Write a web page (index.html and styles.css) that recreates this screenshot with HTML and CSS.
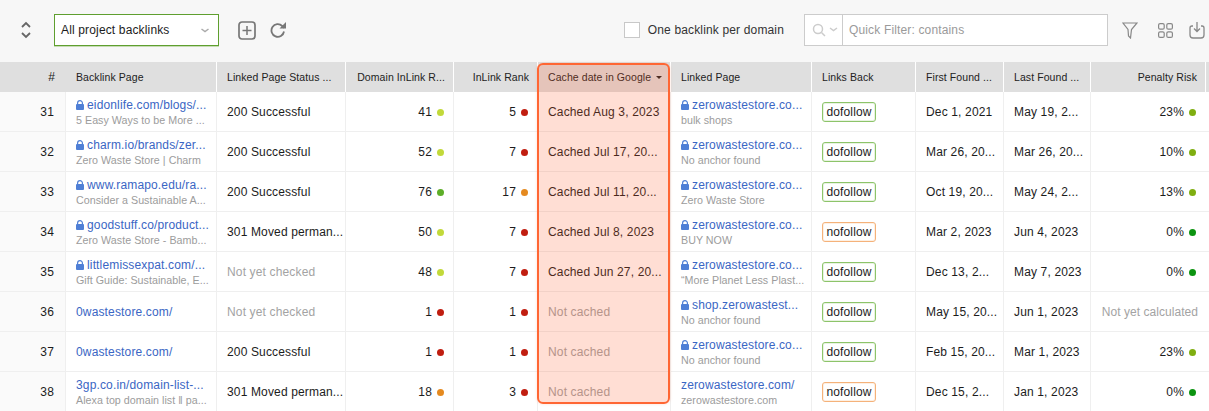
FILE: index.html
```html
<!DOCTYPE html>
<html lang="en">
<head>
<meta charset="utf-8">
<title>Backlinks</title>
<link rel="stylesheet" href="styles.css">
</head>
<body>
<svg class="defs" width="0" height="0"><symbol id="lock" viewBox="0 0 8 10"><path d="M1.600 4.500V3a2.400 2.400 0 0 1 4.800 0v1.500" fill="none" stroke="#4f7fd6" stroke-width="1.200"/><rect y="4" width="8" height="6" rx="1" fill="#4f7fd6"/></symbol></svg>
<div class="toolbar">
  <svg class="ic-sort" width="10" height="18" viewBox="0 0 10 18"><path d="M1 6l4-4 4 4M1 12l4 4 4-4" fill="none" stroke="#666" stroke-width="1.800"/></svg>
  <div class="select"><span>All project backlinks</span><svg width="8" height="5" viewBox="0 0 8 5"><path d="M.5 1L4 3.500 7.500 1" fill="none" stroke="#aaa" stroke-width="1.500"/></svg></div>
  <svg class="ic-plus" width="18" height="19" viewBox="0 0 18 19"><rect x="1" y="1" width="16" height="17" rx="3" fill="none" stroke="#777" stroke-width="1.700"/><path d="M9 5v9M4.500 9.500h9" stroke="#777" stroke-width="1.500"/></svg>
  <svg class="ic-reload" width="17" height="16" viewBox="0 0 17 16"><path d="M14 9.500a6.300 6.300 0 1 1-1.800-5.500l2 1.800" fill="none" stroke="#777" stroke-width="1.800"/><path d="M16 0v6.500H9.500z" fill="#777"/></svg>
  <div class="spacer"></div>
  <span class="check"></span><span class="check-label">One backlink per domain</span>
  <div class="filter">
    <div class="filter-icon"><svg width="26" height="14" viewBox="0 0 26 14"><circle cx="6" cy="6" r="4.500" fill="none" stroke="#ccc" stroke-width="1.500"/><path d="M9.500 9.500l3.500 3.500" stroke="#ccc" stroke-width="1.500"/><path d="M18 5l3.500 2.500L25 5" fill="none" stroke="#ccc" stroke-width="1.500"/></svg></div>
    <span class="filter-text">Quick Filter: contains</span>
  </div>
  <svg class="ic-funnel" width="16" height="17" viewBox="0 0 16 17"><path d="M1 1h14l-5.500 6.500-1 8.500-2-2-.5-6.500z" fill="none" stroke="#888" stroke-width="1.200"/></svg>
  <svg class="ic-grid" width="15" height="15" viewBox="0 0 15 15"><g fill="none" stroke="#888" stroke-width="1.200"><rect x=".6" y=".6" width="5.600" height="5.600" rx="1.500"/><rect x="8.800" y=".6" width="5.600" height="5.600" rx="1.500"/><rect x=".6" y="8.800" width="5.600" height="5.600" rx="1.500"/><rect x="8.800" y="8.800" width="5.600" height="5.600" rx="1.500"/></g></svg>
  <svg class="ic-export" width="16" height="18" viewBox="0 0 16 18"><path d="M4 5H3a2 2 0 0 0-2 2v7a3 3 0 0 0 3 3h8a3 3 0 0 0 3-3V7a2 2 0 0 0-2-2h-1M8 1v9M5 7.500l3 3 3-3" fill="none" stroke="#888" stroke-width="1.300"/></svg>
</div>

<div class="grid-wrap">
<table class="grid">
  <colgroup>
    <col class="c-num"><col class="c-page"><col class="c-status"><col class="c-dom"><col class="c-rank"><col class="c-cache"><col class="c-linked"><col class="c-back"><col class="c-first"><col class="c-last"><col class="c-risk"><col class="c-end">
  </colgroup>
  <thead>
    <tr>
      <th class="r nosep hash">#</th><th>Backlink Page</th><th>Linked Page Status ...</th><th class="r">Domain InLink R...</th><th class="r">InLink Rank</th>
      <th>Cache date in Google<i class="caret"></i></th><th>Linked Page</th><th>Links Back</th><th>First Found ...</th><th>Last Found ...</th><th class="r">Penalty Risk</th><th class="nosep"></th>
    </tr>
  </thead>
  <tbody>
    <tr>
      <td class="num">31</td>
      <td class="link"><a class="l"><svg class="lock"><use href="#lock"/></svg>eidonlife.com/blogs/...</a><small>5 Easy Ways to be More ...</small></td>
      <td>200 Successful</td><td class="r">41<i class="dot lime"></i></td><td class="r">5<i class="dot red"></i></td><td>Cached Aug 3, 2023</td>
      <td class="link"><a class="l"><svg class="lock"><use href="#lock"/></svg>zerowastestore.co...</a><small>bulk shops</small></td>
      <td><span class="tag do">dofollow</span></td><td>Dec 1, 2021</td><td>May 19, 2...</td><td class="r">23%<i class="dot olive"></i></td><td class="end"></td>
    </tr>
    <tr>
      <td class="num">32</td>
      <td class="link"><a class="l"><svg class="lock"><use href="#lock"/></svg>charm.io/brands/zer...</a><small>Zero Waste Store | Charm</small></td>
      <td>200 Successful</td><td class="r">52<i class="dot lime"></i></td><td class="r">7<i class="dot red"></i></td><td>Cached Jul 17, 20...</td>
      <td class="link"><a class="l"><svg class="lock"><use href="#lock"/></svg>zerowastestore.co...</a><small>No anchor found</small></td>
      <td><span class="tag do">dofollow</span></td><td>Mar 26, 20...</td><td>Mar 26, 20...</td><td class="r">10%<i class="dot olive"></i></td><td class="end"></td>
    </tr>
    <tr>
      <td class="num">33</td>
      <td class="link"><a class="l"><svg class="lock"><use href="#lock"/></svg>www.ramapo.edu/ra...</a><small>Consider a Sustainable A...</small></td>
      <td>200 Successful</td><td class="r">76<i class="dot green"></i></td><td class="r">17<i class="dot orange"></i></td><td>Cached Jul 11, 20...</td>
      <td class="link"><a class="l"><svg class="lock"><use href="#lock"/></svg>zerowastestore.co...</a><small>Zero Waste Store</small></td>
      <td><span class="tag do">dofollow</span></td><td>Oct 19, 20...</td><td>May 24, 2...</td><td class="r">13%<i class="dot olive"></i></td><td class="end"></td>
    </tr>
    <tr>
      <td class="num">34</td>
      <td class="link"><a class="l"><svg class="lock"><use href="#lock"/></svg>goodstuff.co/product...</a><small>Zero Waste Store - Bamb...</small></td>
      <td>301 Moved perman...</td><td class="r">50<i class="dot lime"></i></td><td class="r">7<i class="dot red"></i></td><td>Cached Jul 8, 2023</td>
      <td class="link"><a class="l"><svg class="lock"><use href="#lock"/></svg>zerowastestore.co...</a><small>BUY NOW</small></td>
      <td><span class="tag no">nofollow</span></td><td>Mar 2, 2023</td><td>Jun 4, 2023</td><td class="r">0%<i class="dot green2"></i></td><td class="end"></td>
    </tr>
    <tr>
      <td class="num">35</td>
      <td class="link"><a class="l"><svg class="lock"><use href="#lock"/></svg>littlemissexpat.com/...</a><small>Gift Guide: Sustainable, E...</small></td>
      <td class="muted">Not yet checked</td><td class="r">48<i class="dot lime"></i></td><td class="r">7<i class="dot red"></i></td><td>Cached Jun 27, 20...</td>
      <td class="link"><a class="l"><svg class="lock"><use href="#lock"/></svg>zerowastestore.co...</a><small>“More Planet Less Plast...</small></td>
      <td><span class="tag do">dofollow</span></td><td>Dec 13, 2...</td><td>May 7, 2023</td><td class="r">0%<i class="dot green2"></i></td><td class="end"></td>
    </tr>
    <tr>
      <td class="num">36</td>
      <td class="link"><a class="l">0wastestore.com/</a></td>
      <td class="muted">Not yet checked</td><td class="r">1<i class="dot red"></i></td><td class="r">1<i class="dot red"></i></td><td class="muted">Not cached</td>
      <td class="link"><a class="l"><svg class="lock"><use href="#lock"/></svg>shop.zerowastest...</a><small>No anchor found</small></td>
      <td><span class="tag do">dofollow</span></td><td>May 15, 20...</td><td>Jun 1, 2023</td><td class="r muted">Not yet calculated</td><td class="end"></td>
    </tr>
    <tr>
      <td class="num">37</td>
      <td class="link"><a class="l">0wastestore.com/</a></td>
      <td>200 Successful</td><td class="r">1<i class="dot red"></i></td><td class="r">1<i class="dot red"></i></td><td class="muted">Not cached</td>
      <td class="link"><a class="l"><svg class="lock"><use href="#lock"/></svg>zerowastestore.co...</a><small>No anchor found</small></td>
      <td><span class="tag do">dofollow</span></td><td>Feb 15, 20...</td><td>Mar 1, 2023</td><td class="r">23%<i class="dot olive"></i></td><td class="end"></td>
    </tr>
    <tr>
      <td class="num">38</td>
      <td class="link"><a class="l">3gp.co.in/domain-list-...</a><small>Alexa top domain list ‖ pa...</small></td>
      <td>301 Moved perman...</td><td class="r">18<i class="dot orange"></i></td><td class="r">3<i class="dot red"></i></td><td class="muted">Not cached</td>
      <td class="link"><a class="l">zerowastestore.com/</a><small>zerowastestore.com</small></td>
      <td><span class="tag no">nofollow</span></td><td>Dec 15, 2...</td><td>Jan 1, 2023</td><td class="r">0%<i class="dot green2"></i></td><td class="end"></td>
    </tr>
  </tbody>
</table>
<div class="highlight"></div>
</div>
</body>
</html>
```
FILE: styles.css
```css
* { box-sizing: border-box; }
html, body { margin: 0; height: 411px; overflow: hidden; }
body { background: #fff; font: 12px/14px "Liberation Sans", Arial, sans-serif; color: #1c1c1c; letter-spacing: .15px; }
.defs { position: absolute; }

.toolbar { height: 62px; background: #f7f7f7; display: flex; align-items: center; padding: 0 0 2px 21px; }
.ic-sort { flex: none; }
.select { width: 165px; height: 32px; margin-left: 23px; background: #fff; border: 1px solid #5f9f2f; display: flex; align-items: center; justify-content: space-between; padding: 0 9px 0 6px; box-shadow: 0 1px 0 #c6dcb4; }
.ic-plus { margin-left: 19px; flex: none; }
.ic-reload { margin-left: 14px; flex: none; }
.spacer { flex: 1; }
.check { width: 16px; height: 16px; background: #fff; border: 1px solid #c8c8c8; }
.check-label { margin-left: 8px; color: #333; }
.filter { width: 304px; height: 32px; margin-left: 20px; background: #fff; border: 1px solid #ccc; display: flex; }
.filter-icon { width: 38px; border-right: 1px solid #ccc; display: flex; align-items: center; padding-left: 7px; }
.filter-text { padding-left: 6px; line-height: 30px; color: #9a9a9a; }
.ic-funnel { margin-left: 14px; flex: none; }
.ic-grid { margin-left: 20px; flex: none; }
.ic-export { margin-left: 16px; margin-right: 4px; flex: none; }

.grid-wrap { position: relative; }
.grid { width: 1209px; table-layout: fixed; border-collapse: separate; border-spacing: 0; }
.c-num { width: 66px; }
.c-page { width: 151px; }
.c-status { width: 129px; }
.c-dom { width: 108px; }
.c-rank { width: 84px; }
.c-cache { width: 133px; }
.c-linked { width: 141px; }
.c-back { width: 104px; }
.c-first { width: 88px; }
.c-last { width: 87px; }
.c-risk { width: 115px; }
.c-end { width: 3px; }

th { height: 30px; background: #dfdfdf; font-size: 10.5px; letter-spacing: .08px; font-weight: 400; text-align: left; padding: 0 3px 0 10px; border-right: 1px solid #fff; white-space: nowrap; overflow: hidden; color: #222; }
th.nosep { border-right-color: #dfdfdf; }
td { height: 40px; padding: 0 3px 0 10px; border-right: 1px solid #efefef; border-bottom: 1px solid #efefef; white-space: nowrap; overflow: hidden; }
td.link { padding-top: 2px; }
td.end { padding: 0; border-right: 0; }
th.r { text-align: right; padding: 0 8px 0 0; }
th.hash { font-size: 12px; padding-right: 10px; }
td.r { text-align: right; padding: 0 9px 0 0; }
td.num { text-align: right; padding: 0 11px 0 0; background: #fafafa; }
.muted { color: #a3a3a3; }
td.r.muted { padding-right: 8px; letter-spacing: .05px; }
td:nth-child(11) { border-right: 0; padding-right: 10px; }

.l { display: block; color: #3a66c4; line-height: 15px; }
.lock { width: 8px; height: 10px; margin-right: 3px; vertical-align: -1px; }
small { display: block; font-size: 10.7px; line-height: 14px; color: #9c9c9c; letter-spacing: .03px; }

.dot { display: inline-block; width: 7px; height: 7px; border-radius: 50%; margin-left: 5px; vertical-align: 0; }
.lime { background: #c2d93a; }
.red { background: #c01d10; }
.olive { background: #7fae10; }
.green { background: #5dae28; }
.green2 { background: #0c9410; }
.orange { background: #e58a1f; }

.caret { display: inline-block; margin-left: 5px; border: 3px solid transparent; border-top: 3px solid #222; border-bottom: 0; vertical-align: 2px; }
.tag { display: inline-block; height: 20px; line-height: 18px; width: 54px; text-align: center; border-radius: 3px; border: 1px solid; background: #fff; }
.do { border-color: #8dc46a; box-shadow: inset 0 0 0 1px rgba(141, 196, 106, .2); }
.no { border-color: #f5b27a; box-shadow: inset 0 0 0 1px rgba(245, 178, 122, .2); }

.highlight { position: absolute; left: 537px; top: 1px; width: 133px; height: 341px; border: 2px solid #ff6633; border-radius: 6px; background: rgba(255, 90, 40, .2); box-shadow: 0 0 3px rgba(255, 120, 70, .25); pointer-events: none; }
```
